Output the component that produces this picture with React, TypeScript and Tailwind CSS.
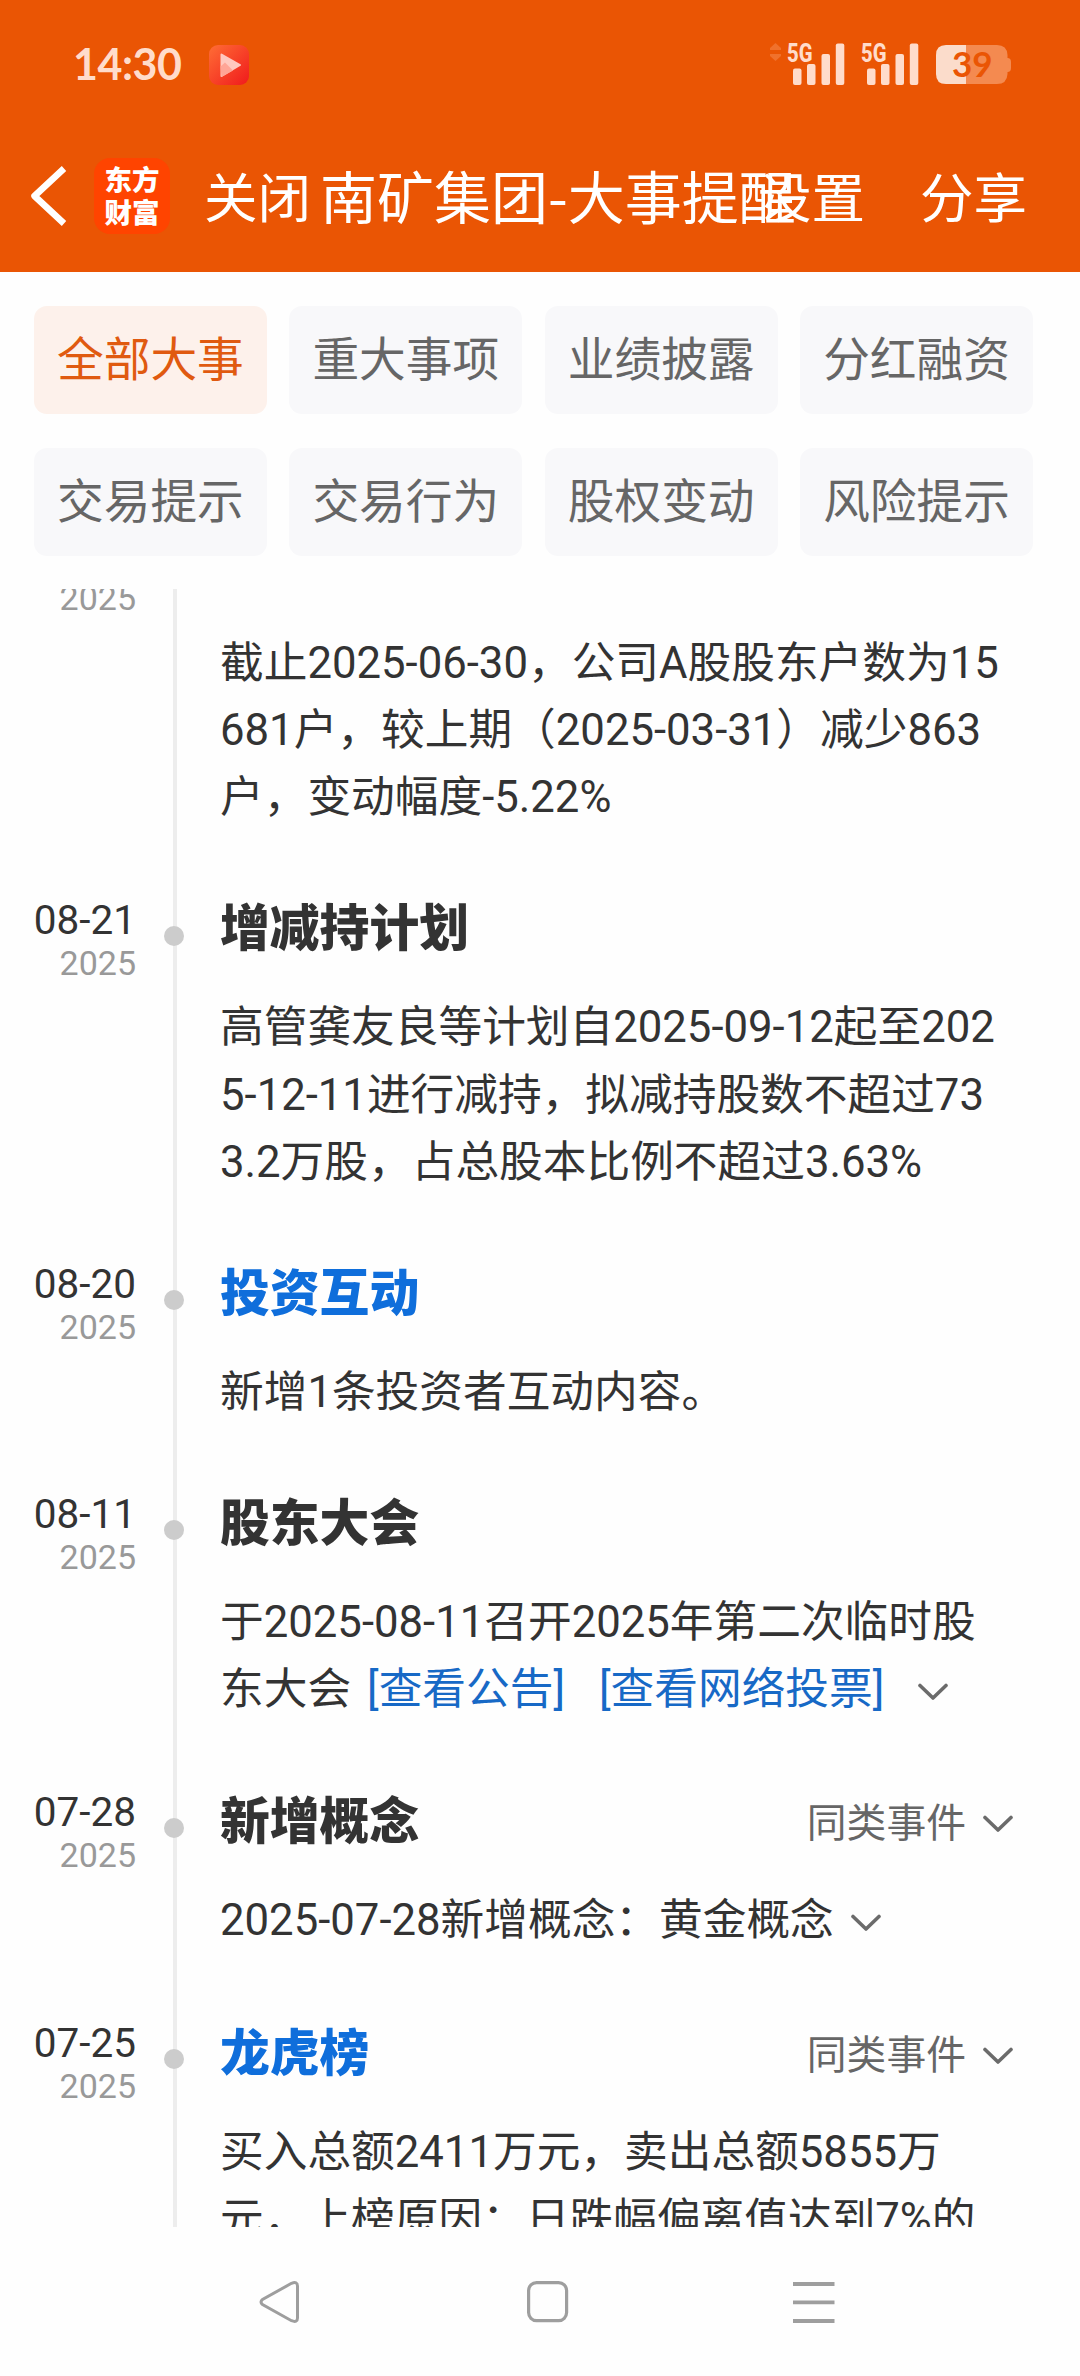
import React from "react";
import clsx from "clsx";

const tabs = [
  "全部大事",
  "重大事项",
  "业绩披露",
  "分红融资",
  "交易提示",
  "交易行为",
  "股权变动",
  "风险提示",
];

type Event = {
  date: string;
  year: string;
  title: string;
  blue?: boolean;
  similar?: boolean;
  lines: React.ReactNode[];
};

const events: Event[] = [
  {
    date: "08-29",
    year: "2025",
    title: "股东户数",
    lines: [
      "截止2025-06-30，公司A股股东户数为15",
      "681户，较上期（2025-03-31）减少863",
      "户，变动幅度-5.22%",
    ],
  },
  {
    date: "08-21",
    year: "2025",
    title: "增减持计划",
    lines: [
      "高管龚友良等计划自2025-09-12起至202",
      "5-12-11进行减持，拟减持股数不超过73",
      "3.2万股，占总股本比例不超过3.63%",
    ],
  },
  {
    date: "08-20",
    year: "2025",
    title: "投资互动",
    blue: true,
    lines: ["新增1条投资者互动内容。"],
  },
  {
    date: "08-11",
    year: "2025",
    title: "股东大会",
    lines: [
      "于2025-08-11召开2025年第二次临时股",
      <>
        东大会
        <a className="ml-[16px] text-[#1769c6]">[查看公告]</a>
        <a className="ml-[34px] text-[#1769c6]">[查看网络投票]</a>
        <Chevron className="ml-[34px] mt-[5px]" />
      </>,
    ],
  },
  {
    date: "07-28",
    year: "2025",
    title: "新增概念",
    similar: true,
    lines: [
      <>
        2025-07-28新增概念：黄金概念
        <Chevron className="ml-[17px] mt-[5px]" />
      </>,
    ],
  },
  {
    date: "07-25",
    year: "2025",
    title: "龙虎榜",
    blue: true,
    similar: true,
    lines: ["买入总额2411万元，卖出总额5855万", "元，上榜原因：日跌幅偏离值达到7%的"],
  },
];

function Chevron({ className }: { className?: string }) {
  return (
    <svg width="30" height="18" viewBox="0 0 30 18" fill="none" className={clsx("shrink-0", className)}>
      <path d="M2 2.5 15 15 28 2.5" stroke="#6b6b6b" strokeWidth="3.6" strokeLinecap="round" strokeLinejoin="round" />
    </svg>
  );
}

function Signal() {
  return (
    <svg width="58" height="44" viewBox="0 0 58 44" fill="#ffdccb" className="overflow-visible">
      <text
        x="0"
        y="19.5"
        fontSize="26"
        fontWeight="800"
        fontFamily="Roboto, sans-serif"
        textLength="25.5"
        lengthAdjust="spacingAndGlyphs"
      >
        5G
      </text>
      <rect x="6" y="26.5" width="8.5" height="16.5" rx="2" />
      <rect x="20" y="22" width="8.5" height="21" rx="2" />
      <rect x="34.5" y="12" width="8.5" height="31" rx="2" />
      <rect x="48.8" y="1.5" width="8.5" height="41.5" rx="2" />
    </svg>
  );
}

function StatusBar() {
  return (
    <div className="flex h-[128px] items-start pl-[73px] pr-[68px] pt-[42px]">
      <span className="w-[109px] font-['Lato',sans-serif] text-[43px] leading-[44px] font-bold tracking-[-0.5px] text-[#ffdccb]">
        14:30
      </span>
      <svg width="40" height="40" viewBox="0 0 40 40" className="ml-[27px] mt-[3px]">
        <defs>
          <linearGradient id="play" x1="0" y1="0" x2="1" y2="1">
            <stop offset="0" stopColor="#ff6d35" />
            <stop offset="1" stopColor="#f01a1c" />
          </linearGradient>
        </defs>
        <rect width="40" height="40" rx="9" fill="url(#play)" />
        <path d="M12.5 9.5 31 20 12.5 31Z" fill="#ffc9bf" stroke="#ffc9bf" strokeWidth="2" strokeLinejoin="round" />
        <path d="M11.5 21.5 16 17.5 24 25.5 12.5 32Z" fill="#ffa596" />
      </svg>

      <div className="ml-auto flex">
        <svg width="11" height="18" viewBox="0 0 11 18" fill="#f0712c" className="mr-[6px] mt-[1px]">
          <path d="M5.5 0 11 5v2H0V5ZM5.5 18 11 13v-2H0v2Z" />
        </svg>
        <Signal />
        <span className="w-4" />
        <Signal />
        <svg width="76" height="40" viewBox="0 0 76 40" className="ml-[17px] mt-[3px] overflow-visible">
          <path d="M10 0H30V39H10Q0 39 0 29V10Q0 0 10 0Z" fill="#fbdccb" />
          <path d="M30 0H61Q71 0 71.5 10V13Q75 13 75 17V23Q75 27 71.5 27V29Q71 39 61 39H30Z" fill="#f48a50" />
          <text x="16" y="32" fontSize="35" fontWeight="700" fontFamily="Lato, sans-serif" fill="#ea5504">
            39
          </text>
        </svg>
      </div>
    </div>
  );
}

function Header() {
  return (
    <header className="h-[272px] bg-[#ea5504] text-white">
      <StatusBar />
      <div className="flex h-[144px] items-center pl-[29px] font-['Noto_Sans_CJK_SC',sans-serif] whitespace-nowrap">
        <svg width="38" height="64" viewBox="0 0 38 64" fill="none" className="-mt-2">
          <path d="M35 4.5 5.5 32 35 59.5" stroke="#fff" strokeWidth="6.5" strokeLinejoin="round" />
        </svg>
        <div className="-mt-2 ml-[27px] flex h-[76px] w-[76px] flex-col items-center justify-center rounded-[16px] bg-[#ff4400] pb-[3px] text-[27.5px] leading-[33px] font-black">
          <span>东方</span>
          <span>财富</span>
        </div>
        <span className="-mt-2.5 ml-[34px] w-[108px] text-[53.5px]">关闭</span>
        <span className="-mt-2.5 ml-[8px] w-[440px] text-[57px]">南矿集团-大事提醒</span>
        <span className="-mt-2.5 ml-[-2px] w-[108px] text-[53.5px]">设置</span>
        <span className="-mt-2.5 ml-[54px] text-[53.5px]">分享</span>
      </div>
    </header>
  );
}

function EventItem({ event }: { event: Event }) {
  return (
    <div className="flex">
      <div className="w-[136px] shrink-0 text-right">
        <p className="pt-[2px] text-[40.5px] leading-[43px] text-[#333]">{event.date}</p>
        <p className="text-[34px] leading-[42px] text-[#999]">{event.year}</p>
      </div>
      <div className="relative ml-[37px] w-1 shrink-0 bg-[#ededed]">
        <span className="absolute top-[29px] -left-[9px] h-5 w-5 rounded-full bg-[#ccc]" />
      </div>
      <div
        className={clsx("ml-[43px] flex-1 text-[#333]", event.similar ? "pt-[3.5px] pb-[66px]" : "pt-[2.5px] pb-[65px]")}
      >
        <div className="mb-[35px] flex h-[60px] items-center justify-between pr-[67px]">
          <h2 className={clsx("text-[49.8px] leading-[60px] font-extrabold", event.blue && "text-[#0f6edb]")}>
            {event.title}
          </h2>
          {event.similar && (
            <div className="mt-[4px] flex items-center text-[39.8px] leading-[60px] text-[#666]">
              同类事件
              <Chevron className="ml-[17px]" />
            </div>
          )}
        </div>
        {event.lines.map((line, i) => (
          <div key={i} className="flex h-[67.4px] items-center text-[43.7px] leading-[67.4px] whitespace-nowrap">
            {line}
          </div>
        ))}
      </div>
    </div>
  );
}

function NavBar() {
  return (
    <nav className="flex h-[149px] items-start pl-[258px] pt-[53px]">
      <svg width="43" height="44" viewBox="0 0 43 44" fill="none" stroke="#9e9e9e" strokeWidth="3">
        <path d="M33.5 3.3 4.5 19.5Q1.5 22 4.5 24.5L33.5 40.7Q39.5 43 39.5 38V6Q39.5 1 33.5 3.3Z" />
      </svg>
      <svg width="44" height="44" viewBox="0 0 44 44" fill="none" stroke="#9e9e9e" strokeWidth="3.2" className="ml-[225px]">
        <rect x="2.6" y="2.6" width="38" height="38" rx="8" />
      </svg>
      <svg width="42" height="44" viewBox="0 0 42 44" stroke="#9e9e9e" strokeWidth="3.8" className="ml-[223px]">
        <path d="M0 4H41.5M0 22.3H41.5M0 41H41.5" />
      </svg>
    </nav>
  );
}

export default function App() {
  return (
    <div
      lang="zh-CN"
      className="flex h-[2376px] w-[1080px] flex-col overflow-hidden bg-[#fefefe] font-['Roboto','Noto_Sans_CJK_SC',sans-serif]"
    >
      <Header />
      <div className="grid grid-cols-4 gap-x-[22.5px] gap-y-[34px] pt-[34px] pr-[47px] pl-[34px]">
        {tabs.map((tab, i) => (
          <button
            key={tab}
            className={clsx(
              "h-[108px] rounded-[13px] pt-px text-[46.7px] whitespace-nowrap",
              i === 0 ? "bg-[#fdf1eb] text-[#e05a10]" : "bg-[#f8f8fa] text-[#666]"
            )}
          >
            {tab}
          </button>
        ))}
      </div>
      <main className="mt-[33px] h-[1638px] overflow-hidden">
        <div className="-mt-[57px]">
          {events.map((event) => (
            <EventItem key={event.date} event={event} />
          ))}
        </div>
      </main>
      <NavBar />
    </div>
  );
}
